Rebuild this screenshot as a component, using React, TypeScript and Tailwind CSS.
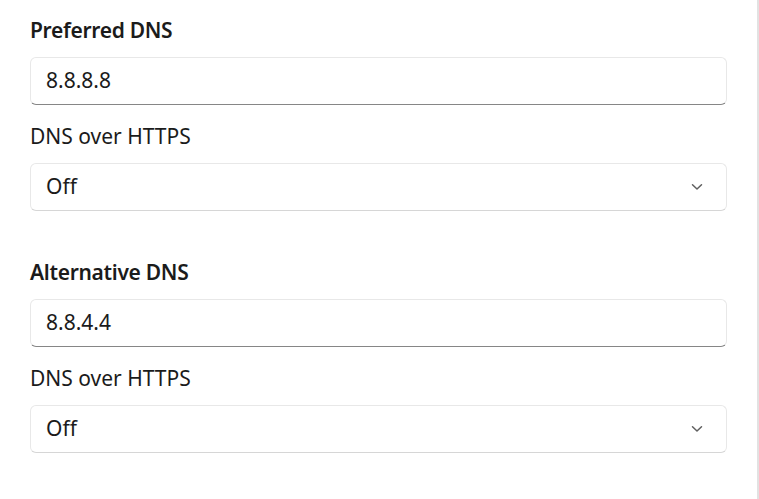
import React from 'react';

function Chevron() {
  return (
    <svg width="12" height="8" viewBox="0 0 12 8" fill="none" className="text-[#5f5f5f]">
      <path d="M1.5 1.75 L6 6 L10.5 1.75" stroke="currentColor" strokeWidth="1.5" strokeLinecap="round" strokeLinejoin="round" />
    </svg>
  );
}

function TextBox({ value }: { value: string }) {
  return (
    <div className="h-[48px] rounded-[6px] border border-[#e8e8e8] border-b-[1.5px] border-b-[#868686] bg-white flex items-center px-[15px] text-[21px] text-[#1b1b1b]">
      {value}
    </div>
  );
}

function ComboBox({ value }: { value: string }) {
  return (
    <div className="h-[48px] rounded-[6px] border border-[#e8e8e8] border-b-[#d6d6d6] bg-white flex items-center justify-between pl-[15px] pr-[23px] text-[21px] text-[#1b1b1b]">
      <span>{value}</span>
      <Chevron />
    </div>
  );
}

function DnsGroup({ title, address }: { title: string; address: string }) {
  return (
    <div className="flex flex-col">
      <div className="h-[28px] leading-[28px] text-[21px] font-semibold tracking-[-0.3px] text-[#1b1b1b]">{title}</div>
      <div className="mt-[13px]">
        <TextBox value={address} />
      </div>
      <div className="mt-[17px] h-[28px] leading-[28px] text-[21px] text-[#1b1b1b]">DNS over HTTPS</div>
      <div className="mt-[13px]">
        <ComboBox value="Off" />
      </div>
    </div>
  );
}

export default function App() {
  return (
    <div className="min-h-screen h-[499px] w-[759px] bg-white flex" style={{ fontFamily: '"Noto Sans", "Open Sans", sans-serif' }}>
      <div className="w-[757px] px-[30px] pt-[16px] flex flex-col gap-[47px]">
        <DnsGroup title="Preferred DNS" address="8.8.8.8" />
        <DnsGroup title="Alternative DNS" address="8.8.4.4" />
      </div>
      <div className="w-[2px] h-full bg-[#e2e2e2]" />
    </div>
  );
}
